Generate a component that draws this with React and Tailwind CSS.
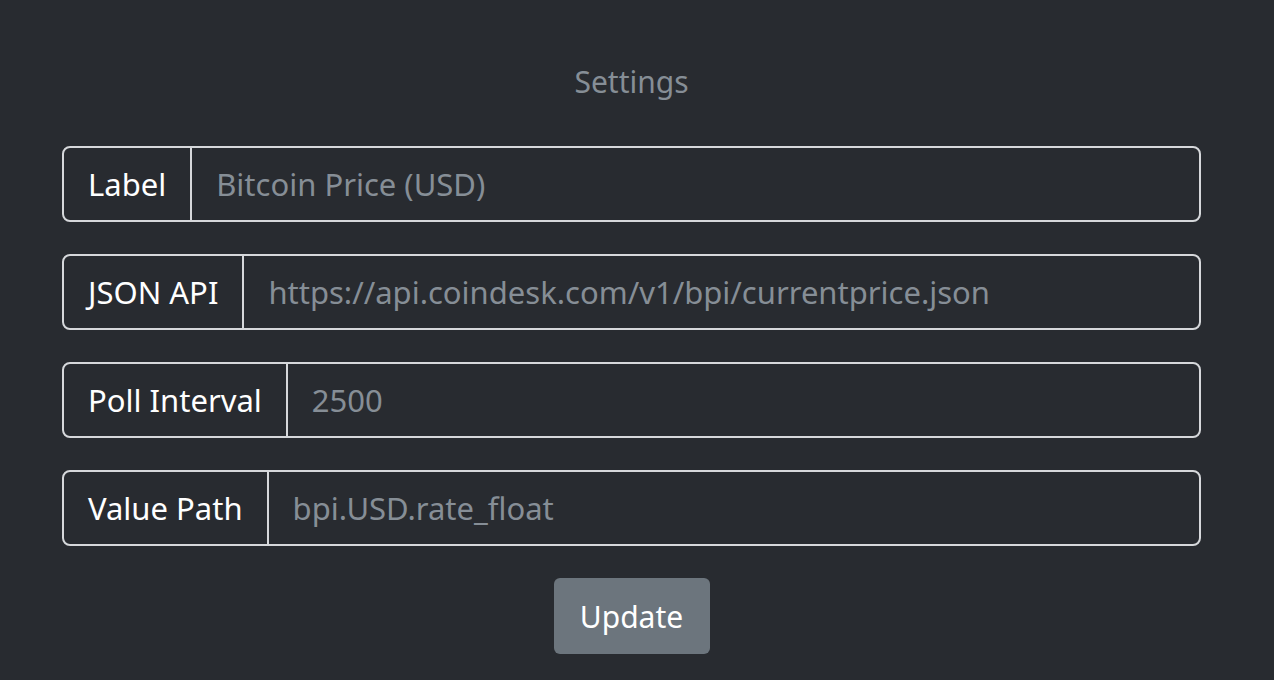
const fields = [
  { label: 'Label', value: 'Bitcoin Price (USD)' },
  { label: 'JSON API', value: 'https://api.coindesk.com/v1/bpi/currentprice.json' },
  { label: 'Poll Interval', value: '2500' },
  { label: 'Value Path', value: 'bpi.USD.rate_float' },
];

export default function App() {
  return (
    <div className="min-h-[680px] bg-[#282b30] pl-[62px] pr-[73px] pt-[61px] font-['Noto_Sans',sans-serif]">
      <h2 className="text-center text-[30px] leading-[42px] text-[#868e96]">Settings</h2>
      <form className="mt-[43px] flex flex-col gap-[32px]">
        {fields.map((f) => (
          <div
            key={f.label}
            className="flex h-[76px] items-stretch rounded-[8px] border-2 border-[#d6d8db]"
          >
            <span className="flex items-center border-r-2 border-[#d6d8db] px-[24px] text-[31px] text-white">
              {f.label}
            </span>
            <input
              readOnly
              value={f.value}
              className="min-w-0 flex-1 bg-transparent px-[24px] text-[31px] text-[#868e96] outline-none"
            />
          </div>
        ))}
      </form>
      <div className="mt-[32px] flex justify-center">
        <button className="h-[76px] w-[156px] rounded-[6px] bg-[#6c757d] text-[30px] text-white">
          Update
        </button>
      </div>
    </div>
  );
}
